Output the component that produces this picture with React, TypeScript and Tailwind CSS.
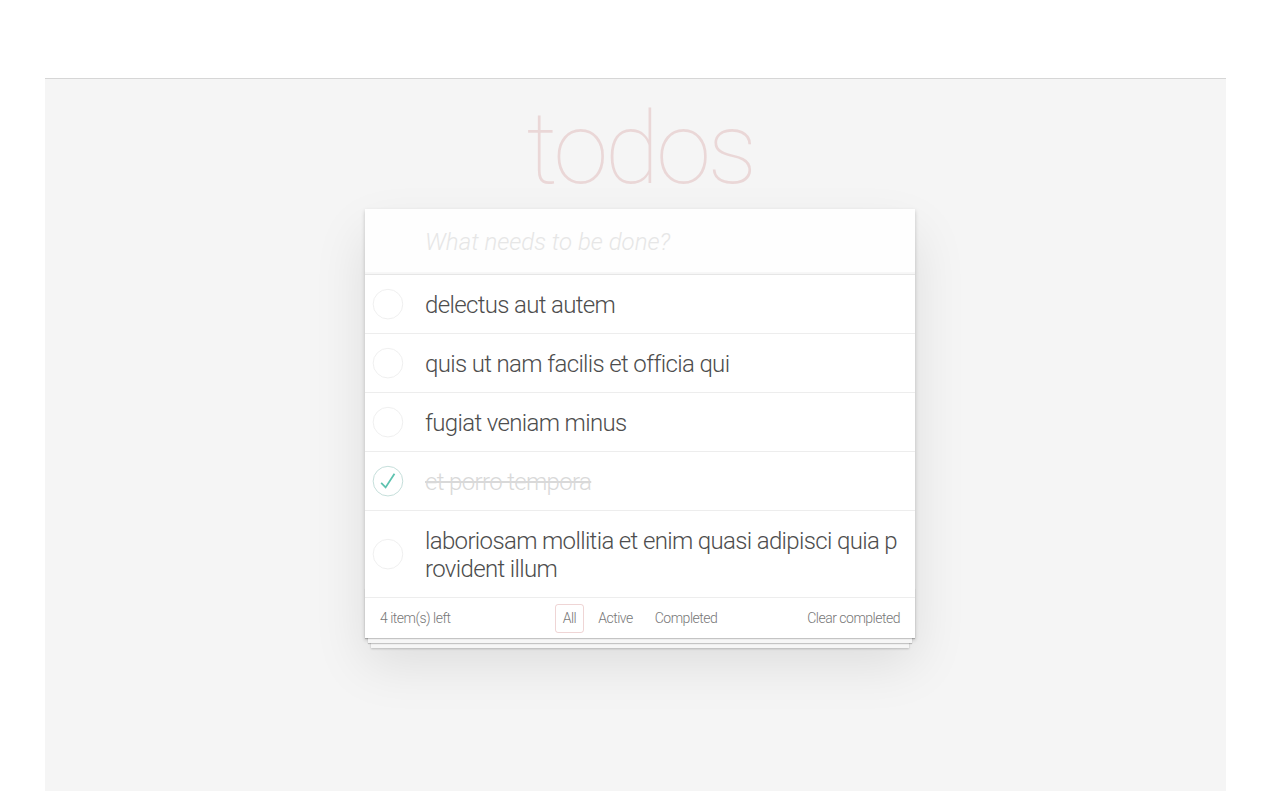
import React from "react";

const FONT = { fontFamily: '"Helvetica Neue", Roboto, "Liberation Sans", sans-serif' };

type Todo = { title: string; done: boolean; lines?: string[] };

const todos: Todo[] = [
  { title: "delectus aut autem", done: false },
  { title: "quis ut nam facilis et officia qui", done: false },
  { title: "fugiat veniam minus", done: false },
  { title: "et porro tempora", done: true },
  {
    title: "laboriosam mollitia et enim quasi adipisci quia provident illum",
    done: false,
    lines: ["laboriosam mollitia et enim quasi adipisci quia p", "rovident illum"],
  },
];

function Toggle({ done }: { done: boolean }) {
  return (
    <svg width="40" height="40" viewBox="-10 -18 100 135" className="shrink-0">
      <circle cx="50" cy="50" r="50" fill="none" stroke={done ? "#bddad5" : "#ededed"} strokeWidth="3" />
      {done && <path fill="none" stroke="#5dc2af" strokeWidth="6" d="M72 25L42 71 27 56" />}
    </svg>
  );
}

export default function App() {
  return (
    <div className="w-[1280px] h-[800px] bg-white" style={FONT}>
      <div className="h-[78px]" />
      <div className="ml-[45px] w-[1181px] h-[713px] border-t border-[#d6d6d6] bg-[#f5f5f5]">
        <div className="ml-[320px] w-[550px]">
          <h1 className="h-[130px] pt-[20px] text-center text-[100px] leading-[100px] font-thin text-[rgba(175,47,47,0.15)] tracking-[-3.5px]">
            todos
          </h1>
          <div className="relative bg-white shadow-[0_2px_4px_0_rgba(0,0,0,0.2),0_25px_50px_0_rgba(0,0,0,0.1)]">
            <input
              className="block w-full h-[65px] pl-[60px] pr-4 text-[24px] font-light bg-[rgba(0,0,0,0.003)] shadow-[inset_0_-2px_1px_rgba(0,0,0,0.03)] outline-none placeholder:italic placeholder:text-[#e6e6e6] text-[#4d4d4d]"
              placeholder="What needs to be done?"
              style={FONT}
            />
            <ul className="border-t border-[#e6e6e6]">
              {todos.map((t, i) => (
                <li key={i} className="flex items-center border-b border-[#ededed] text-[24px]">
                  <Toggle done={t.done} />
                  <div
                    className={
                      "pl-[20px] pr-[15px] pt-[16px] pb-[14px] leading-[28px] font-light tracking-[-0.65px] " +
                      (t.done ? "text-[#d9d9d9] line-through" : "text-[#4d4d4d]")
                    }
                  >
                    {t.lines
                      ? t.lines.map((l, j) => (
                          <div key={j} className="whitespace-nowrap">
                            {l}
                          </div>
                        ))
                      : t.title}
                  </div>
                </li>
              ))}
            </ul>
            <div className="relative flex items-center h-[40px] px-[15px] text-[14px] font-light tracking-[-0.5px] text-[#777]">
              <div className="absolute inset-x-0 bottom-0 h-[50px] overflow-hidden shadow-[0_1px_1px_rgba(0,0,0,0.2),0_8px_0_-3px_#f6f6f6,0_9px_1px_-3px_rgba(0,0,0,0.2),0_16px_0_-6px_#f6f6f6,0_17px_2px_-6px_rgba(0,0,0,0.2)] pointer-events-none" />
              <div className="relative flex-1">4 item(s) left</div>
              <div className="relative flex items-center">
                <span className="mx-[3px] px-[7px] py-[3px] rounded-[3px] border border-[rgba(175,47,47,0.2)]">All</span>
                <span className="mx-[3px] px-[7px] py-[3px] rounded-[3px] border border-transparent">Active</span>
                <span className="mx-[3px] px-[7px] py-[3px] rounded-[3px] border border-transparent">Completed</span>
              </div>
              <div className="relative flex-1 text-right">Clear completed</div>
            </div>
          </div>
        </div>
      </div>
    </div>
  );
}
